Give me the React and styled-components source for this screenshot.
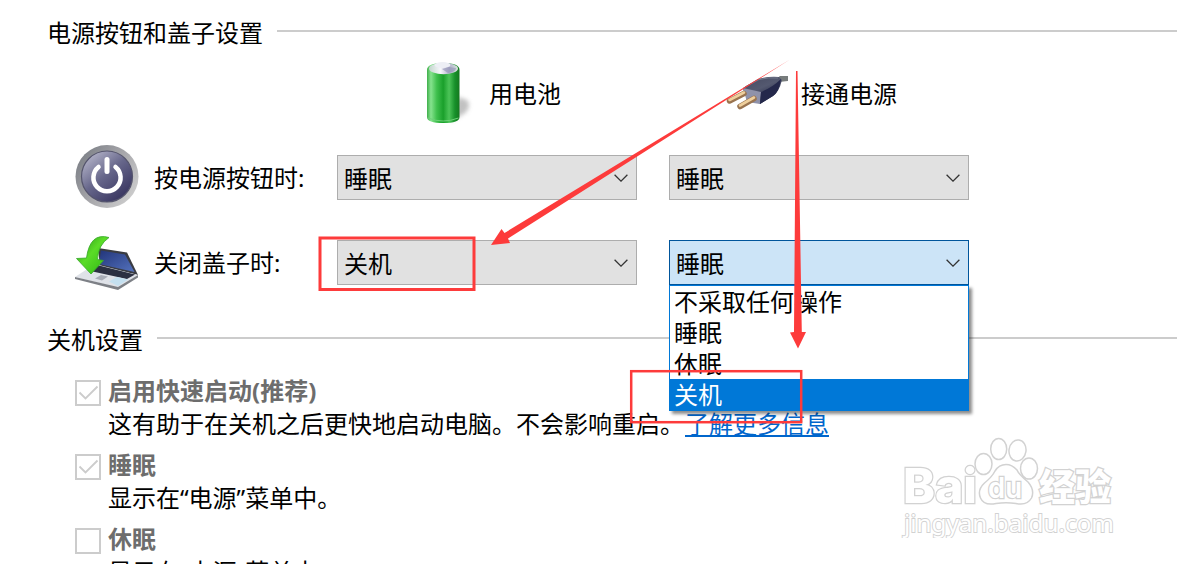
import React, { useState } from 'react'
import styled, { createGlobalStyle } from 'styled-components'

const actions = ['不采取任何操作', '睡眠', '休眠', '关机']

function Combo({ value, open, children }) {
  return (
    <ComboBox $open={open}>
      {value}
      <Chevron viewBox="0 0 14 8">
        <path d="M0.6 0.8 L7 7.1 L13.4 0.8" fill="none" stroke="#333" strokeWidth="1.3" />
      </Chevron>
      {children}
    </ComboBox>
  )
}

function Option({ checked, title, children }) {
  return (
    <OptionRow>
      <Check>
        {checked && (
          <svg width="22" height="22" viewBox="0 0 22 22">
            <path d="M2.5 10.5 L8.5 16.5 L20.5 4.5" fill="none" stroke="#ccc" strokeWidth="1.8" />
          </svg>
        )}
      </Check>
      <div>
        <OptionTitle>{title}</OptionTitle>
        <OptionText>{children}</OptionText>
      </div>
    </OptionRow>
  )
}

function BatteryIcon() {
  return (
    <svg width="64" height="64" viewBox="0 0 64 64">
      <defs>
        <linearGradient id="cell" x1="0" x2="1">
          <stop offset="0" stopColor="#3fae4a" />
          <stop offset="0.12" stopColor="#86e38e" />
          <stop offset="0.3" stopColor="#3fc04d" />
          <stop offset="0.5" stopColor="#1aa02b" />
          <stop offset="0.68" stopColor="#4cc458" />
          <stop offset="0.86" stopColor="#17902a" />
          <stop offset="1" stopColor="#15781f" />
        </linearGradient>
        <linearGradient id="cap" x1="0" x2="1">
          <stop offset="0" stopColor="#c3d6cd" />
          <stop offset="0.4" stopColor="#f6f7fb" />
          <stop offset="0.7" stopColor="#b2b2cb" />
          <stop offset="1" stopColor="#d5e4db" />
        </linearGradient>
        <filter id="soft" x="-50%" y="-50%" width="200%" height="200%">
          <feGaussianBlur stdDeviation="2" />
        </filter>
      </defs>
      <path d="M36 36 L45 39 Q50 45 43 52 L30 60 Z" fill="#999" opacity="0.6" filter="url(#soft)" />
      <path d="M5 9 Q5 2 21.500 2 Q37.500 2 37.500 9 V56 Q37.500 62 21.500 62 Q5 62 5 56 Z" fill="url(#cell)" />
      <path d="M6 57 Q21 63 36.500 57" fill="none" stroke="#6fd079" strokeWidth="1" />
      <ellipse cx="21.500" cy="7.500" rx="14.500" ry="5.800" fill="url(#cap)" />
      <ellipse cx="20.500" cy="4" rx="8" ry="3" fill="#edeff5" />
      <path d="M20 8 L26 12 Q34 11 34 7 L27 6 Z" fill="#8f8fb4" opacity="0.6" />
    </svg>
  )
}

function PlugIcon() {
  return (
    <svg width="64" height="40" viewBox="0 0 64 40">
      <defs>
        <linearGradient id="plug" x1="0" y1="0" x2="0.6" y2="1">
          <stop offset="0" stopColor="#454960" />
          <stop offset="0.5" stopColor="#545970" />
          <stop offset="1" stopColor="#171b3b" />
        </linearGradient>
      </defs>
      <path d="M51 6 L55 3 L63 3 L63 8 L54 9 Z" fill="#777c7c" />
      <path d="M18 15 L33 6 Q44 3 54 4 L57 7 Q54 19 48 23 L35 31 L19 20 Z" fill="url(#plug)" />
      <path d="M18 15 L36 19 L35 31 L22 29 Z" fill="#8f92aa" />
      <path d="M36 19 Q48 14 56 6 Q54 19 48 23 L35 31 Z" fill="#24284b" />
      <path d="M20 14 L34 6.500 Q44 4 53 5" fill="none" stroke="#747a8c" strokeWidth="1" />
      <path d="M4.500 28 L19 20.500 M15 33.500 L29 25.500" stroke="#9a7450" strokeWidth="5.500" strokeLinecap="round" />
      <path d="M4.500 27 L19 19.500 M15 32.500 L29 24.500" stroke="#efcf9c" strokeWidth="2.600" strokeLinecap="round" />
    </svg>
  )
}

function PowerIcon() {
  return (
    <svg width="64" height="64" viewBox="0 0 64 64">
      <defs>
        <linearGradient id="rim" x1="0" y1="0.1" x2="1" y2="0.8">
          <stop offset="0" stopColor="#777b82" />
          <stop offset="0.5" stopColor="#a5a5a9" />
          <stop offset="1" stopColor="#d0d0d0" />
        </linearGradient>
        <linearGradient id="face" x1="0.1" y1="0.1" x2="0.75" y2="0.9">
          <stop offset="0" stopColor="#b4b4c9" />
          <stop offset="0.5" stopColor="#67678b" />
          <stop offset="1" stopColor="#3d3a64" />
        </linearGradient>
      </defs>
      <circle cx="32" cy="31.500" r="31.500" fill="url(#rim)" />
      <circle cx="32" cy="31.500" r="25.500" fill="url(#face)" stroke="#55556d" strokeWidth="1.200" />
      <path d="M23.500 22 A13.600 13.600 0 1 0 40.500 22" fill="none" stroke="#fff" strokeWidth="4.500" strokeLinecap="round" />
      <path d="M32 14.500 V26.500" stroke="#fff" strokeWidth="5" strokeLinecap="round" />
    </svg>
  )
}

function LidIcon() {
  return (
    <svg width="64" height="56" viewBox="0 0 64 56">
      <defs>
        <linearGradient id="screen" x1="0" y1="0" x2="1" y2="1">
          <stop offset="0" stopColor="#22357a" />
          <stop offset="1" stopColor="#5472bd" />
        </linearGradient>
        <linearGradient id="arrow" x1="0" y1="0" x2="1" y2="1">
          <stop offset="0" stopColor="#238c16" />
          <stop offset="0.45" stopColor="#5bdc27" />
          <stop offset="1" stopColor="#2bb513" />
        </linearGradient>
      </defs>
      <path d="M23 14 L52 18.500 L63 41 L25 32 Z" fill="#3a3c42" />
      <path d="M26 16.500 L50 20.500 L59.500 38 L24 30 Z" fill="url(#screen)" />
      <path d="M0 43 L20 30 L63 41 L43 53.500 Z" fill="#dfe2e8" />
      <path d="M22 31 L60 40.500 L52 45 L13 36.500 Z" fill="#2c3042" />
      <path d="M34 47.500 L42 43 L53 45.500 L43 52 Z" fill="#c4e0f0" />
      <path d="M20 44.500 L26 41 L33 42.500 L27 46.500 Z" fill="#a9adb7" />
      <path d="M0 43 L43 53 L63 41 V43.500 L43 56 L0 45 Z" fill="#7d8086" />
      <path d="M34 3.500 Q15 -2 11.500 24 L1.500 24.500 L16 40 L28.500 26.500 L22.500 25.500 Q23 11 34 3.500 Z" fill="url(#arrow)" stroke="#36a828" strokeWidth="0.800" />
    </svg>
  )
}

function Watermark() {
  return (
    <Mark width="220" height="106" viewBox="0 0 220 106">
      <g fill="#fff" stroke="#d2d2d2" strokeWidth="1.500">
        <MarkText x="3" y="71" fontSize="48" textLength="74" lengthAdjust="spacingAndGlyphs">Bai</MarkText>
        <ellipse cx="83.500" cy="32" rx="8.500" ry="10.500" />
        <ellipse cx="98.700" cy="17" rx="8" ry="10.500" />
        <ellipse cx="117.500" cy="18.500" rx="8.500" ry="10.500" transform="rotate(8 117.500 18.500)" />
        <ellipse cx="129" cy="36.500" rx="8.500" ry="10.500" />
        <path d="M106 32.500 Q112 32.500 117 38 Q118.500 42 128 50 Q135 58 131.500 66 Q127 74 116 71.500 Q106 70 96 71.500 Q84 74 80.500 66 Q77 58 84.500 51 Q92 45 95 39 Q99 32.500 106 32.500 Z" />
        <MarkText $thin x="88" y="66" fontSize="29" textLength="34" lengthAdjust="spacingAndGlyphs">du</MarkText>
        <MarkText x="139" y="69" fontSize="37" textLength="72" lengthAdjust="spacingAndGlyphs">经验</MarkText>
        <MarkText $light x="4" y="100" fontSize="24" textLength="210" lengthAdjust="spacingAndGlyphs">jingyan.baidu.com</MarkText>
      </g>
    </Mark>
  )
}

function App() {
  const [selected] = useState('关机')

  return (
    <Page>
      <GlobalStyle />
      <SectionTitle>电源按钮和盖子设置</SectionTitle>
      <Grid>
        <Source />
        <Source $indent="85px" $gap="3px">
          <BatteryIcon />
          <span>用电池</span>
        </Source>
        <Source $indent="56px" $gap="12px">
          <PlugIcon />
          <span>接通电源</span>
        </Source>

        <RowLabel>
          <PowerIcon />
          <span>按电源按钮时:</span>
        </RowLabel>
        <Combo value="睡眠" />
        <Combo value="睡眠" />

        <RowLabel>
          <LidIcon />
          <span>关闭盖子时:</span>
        </RowLabel>
        <Combo value="关机" />
        <Combo value="睡眠" open>
          <Menu>
            {actions.map((action) => (
              <Item key={action} $active={action === selected}>{action}</Item>
            ))}
          </Menu>
        </Combo>
      </Grid>

      <SectionTitle>关机设置</SectionTitle>
      <Options>
        <Option checked title="启用快速启动(推荐)">
          这有助于在关机之后更快地启动电脑。不会影响重启。<Link href="#">了解更多信息</Link>
        </Option>
        <Option checked title="睡眠">显示在“电源”菜单中。</Option>
        <Option title="休眠">显示在“电源”菜单中。</Option>
      </Options>

      <Watermark />
      <Notes width="1177" height="564" viewBox="0 0 1177 564">
        <g fill="none" stroke="#fd3b3b">
          <rect x="320" y="238" width="154" height="51.500" strokeWidth="3" />
          <rect x="631.200" y="371.200" width="170" height="51" strokeWidth="2.500" />
        </g>
        <g fill="#fd3b3b">
          <path d="M790 59.500 L508 238.500 L510 243 L491 245 L501.500 229 L504.500 233 Z" />
          <path d="M796 71 L797.500 71 L801.800 332 L806 332 L798 348.500 L790 332.500 L794 332 Z" />
        </g>
      </Notes>
    </Page>
  )
}

const GlobalStyle = createGlobalStyle`
body{
  margin:0;
  background:#fff;
  overflow:hidden;
}
*{
  box-sizing:border-box;
}
svg{
  display:block;
  flex-shrink:0;
}
`;
const Page = styled.main`
position:relative;
width:1177px;
height:564px;
overflow:hidden;
color:#000;
font-family:"Noto Sans","Noto Sans CJK SC",sans-serif;
font-size:24px;
line-height:32px;
font-weight:400;
white-space:nowrap;
`;
const SectionTitle = styled.h2`
display:flex;
align-items:center;
gap:14px;
margin:0;
padding:17px 0 0 47px;
font-size:24px;
font-weight:400;
line-height:32px;
&::after{
  content:'';
  flex:1;
  height:2px;
  margin-bottom:4px;
  background:#ccc;
}
`;
const Grid = styled.div`
display:grid;
grid-template-columns:230px 300px 300px;
column-gap:32px;
grid-template-rows:87px 85px 85px;
padding-left:75px;
height:247px;
margin-top:11px;
`;
const Source = styled.div`
display:flex;
align-items:center;
height:66px;
gap:${(props) => props.$gap || 0};
padding-left:${(props) => props.$indent || 0};
span{
  padding-top:2px;
}
`;
const RowLabel = styled.div`
display:flex;
align-items:center;
height:64px;
gap:15px;
margin-top:-2px;
span{
  padding-top:2px;
}
`;
const ComboBox = styled.div`
position:relative;
display:flex;
align-items:center;
justify-content:space-between;
height:45px;
margin-top:8px;
padding:2px 8px 0 6px;
background:${(props) => (props.$open ? '#cce4f7' : '#e1e1e1')};
border:1px solid ${(props) => (props.$open ? '#00559b' : '#adadad')};
`;
const Chevron = styled.svg`
width:14px;
height:8px;
margin-top:-2px;
`;
const Menu = styled.ul`
position:absolute;
z-index:1;
top:44px;
left:-1px;
width:300px;
margin:0;
padding:0;
list-style:none;
background:#fff;
border:1px solid #0078d7;
box-shadow:3px 3px 3px rgba(0,0,0,.45);
`;
const Item = styled.li`
height:31px;
padding-left:4px;
line-height:32px;
color:${(props) => (props.$active ? '#fff' : '#000')};
background:${(props) => (props.$active ? '#0078d7' : '#fff')};
`;
const Options = styled.div`
padding:20px 0 0 75px;
`;
const OptionRow = styled.div`
display:flex;
gap:7px;
height:74px;
`;
const Check = styled.span`
width:26px;
height:26px;
margin-top:4px;
border:2px solid #ccc;
flex-shrink:0;
`;
const OptionTitle = styled.div`
height:32px;
line-height:30px;
color:#6d6d6d;
font-weight:700;
`;
const OptionText = styled.div`
color:#000;
`;
const Link = styled.a`
margin-left:1px;
color:#0066cc;
text-decoration:underline;
text-decoration-thickness:2px;
text-underline-offset:2px;
`;
const Mark = styled.svg`
position:absolute;
left:900px;
top:432px;
`;
const MarkText = styled.text`
font-family:${(props) => (props.$light ? '"Noto Sans"' : 'Inter,"Noto Sans CJK SC"')},sans-serif;
font-weight:${(props) => (props.$light ? 400 : props.$thin ? 600 : 800)};
paint-order:stroke;
stroke-width:${(props) => (props.$light ? 1.8 : 2.5)};
`;
const Notes = styled.svg`
position:absolute;
z-index:2;
left:0;
top:0;
pointer-events:none;
`;

export default App
